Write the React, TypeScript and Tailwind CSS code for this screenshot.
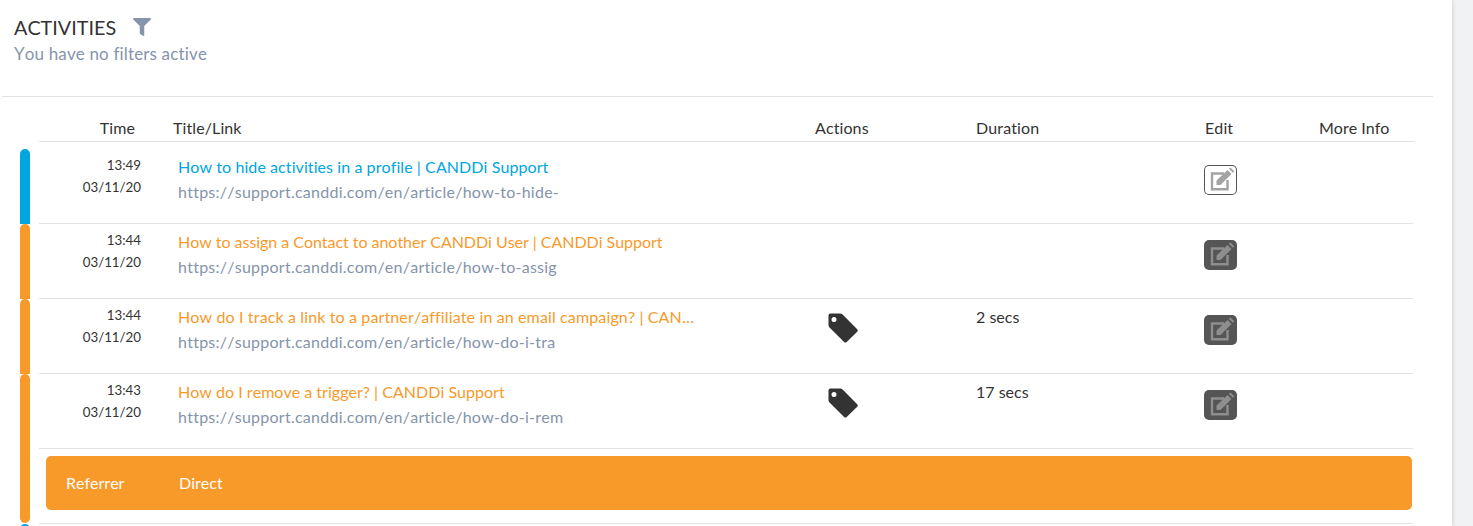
import React from 'react';
import { FaFilter } from 'react-icons/fa';

interface Activity {
  time: string;
  date: string;
  title: string;
  titleSpacing: string;
  url: string;
  tone: 'blue' | 'orange';
  tag?: boolean;
  duration?: string;
}

const activities: Activity[] = [
  { time: '13:49', date: '03/11/20', title: 'How to hide activities in a profile | CANDDi Support', titleSpacing: 'tracking-[0.08px]', url: 'https://support.canddi.com/en/article/how-to-hide-', tone: 'blue' },
  { time: '13:44', date: '03/11/20', title: 'How to assign a Contact to another CANDDi User | CANDDi Support', titleSpacing: 'tracking-[-0.04px]', url: 'https://support.canddi.com/en/article/how-to-assig', tone: 'orange' },
  { time: '13:44', date: '03/11/20', title: 'How do I track a link to a partner/affiliate in an email campaign? | CANDDi Support', titleSpacing: 'tracking-[0.13px]', url: 'https://support.canddi.com/en/article/how-do-i-tra', tone: 'orange', tag: true, duration: '2 secs' },
  { time: '13:43', date: '03/11/20', title: 'How do I remove a trigger? | CANDDi Support', titleSpacing: 'tracking-[0.02px]', url: 'https://support.canddi.com/en/article/how-do-i-rem', tone: 'orange', tag: true, duration: '17 secs' },
];

const EditIcon = () => (
  <svg viewBox="0 0 33 30" className="w-[33px] h-[30px]" fill="none">
    <path d="M23.5 15v9.2H8V8.5h12" stroke="currentColor" strokeWidth="2.4" />
    <path d="M12.5 15.5 23.500 5l4 4-11 11h-4z M24.800 3.800l1.600-1.400 3.900 3.900-1.400 1.500z" fill="currentColor" />
  </svg>
);

const TagIcon = () => (
  <svg viewBox="0 0 30 30" className="w-[30px] h-[30px]">
    <path
      fillRule="evenodd"
      fill="currentColor"
      d="M2.500 0.500h9.500q1.500 0 2.600 1.100l14.600 14.600q1.200 1.300 0 2.600L18.700 29q-1.300 1.200-2.600 0L1.500 14.400Q0.500 13.300 0.500 12V2.500q0-2 2-2zM6 4a2.500 2.500 0 1 0 0 5 2.500 2.500 0 0 0 0-5z"
    />
  </svg>
);

const EditButton = ({ active }: { active: boolean }) => (
  <button
    className={`w-[33px] h-[30px] rounded-[5px] flex items-center justify-center ${
      active ? 'bg-white ring-1 ring-inset ring-[#555555] text-[#a3a3a3]' : 'bg-[#555555] text-[#8e8e8e]'
    }`}
  >
    <EditIcon />
  </button>
);

const App = () => {
  return (
    <div className="w-[1473px] h-[526px] overflow-hidden bg-[#f1f2f4] font-['Lato',sans-serif] text-[#333333] [font-kerning:none] [font-variant-ligatures:none]">
      <div className="w-[1452px] h-[526px] bg-white shadow-[1px_0_4px_rgba(0,0,0,0.12)]">
        <div className="pl-[12px] pt-[15px] h-[97px] ml-[2px] w-[1431px] border-b border-[#dfe3e6]">
          <div className="flex items-center h-[24px]">
            <span className="text-[19.8px] leading-[24px] w-[102px]">ACTIVITIES</span>
            <FaFilter className="ml-[17px] w-[18px] h-[18px] text-[#8594ab]" />
          </div>
          <div className="text-[17px] leading-[24px] tracking-[0.15px] text-[#8594ab] mt-[3px]">You have no filters active</div>
        </div>

        <div className="ml-[39px] w-[1376px] h-[45px] pt-[21px] flex text-[16px] leading-[20px] tracking-[0.1px] border-b border-[#dfe3e6]">
          <div className="w-[96px] text-right">Time</div>
          <div className="ml-[38px] w-[642px]">Title/Link</div>
          <div className="w-[161px]">Actions</div>
          <div className="w-[229px]">Duration</div>
          <div className="w-[114px]">Edit</div>
          <div className="tracking-normal">More Info</div>
        </div>

        {activities.map((a, i) => (
          <div key={i} className="flex">
            <div className="w-[39px] shrink-0 pl-[20px]">
              <div
                className={`w-[10px] rounded-t-[5px] ${i === 0 ? 'mt-[7px] h-[75px]' : 'h-[75px]'} ${
                  a.tone === 'blue' ? 'bg-[#00a6df]' : 'bg-[#f89a2a]'
                }`}
              />
            </div>
            <div className={`w-[1374px] flex border-b border-[#dfe3e6] ${i === 0 ? 'h-[82px] pt-[7px]' : 'h-[75px]'}`}>
              <div className="w-[102px] shrink-0 text-right text-[13.3px] leading-[22px] pt-[5px]">
                <div>{a.time}</div>
                <div>{a.date}</div>
              </div>
              <div className="ml-[37px] w-[525px] shrink-0 pt-[5px]">
                <div className={`text-[16px] leading-[25px] truncate ${a.titleSpacing} ${a.tone === 'blue' ? 'text-[#00a6df]' : 'text-[#f89a2a]'}`}>
                  {a.title}
                </div>
                <div className="text-[16px] leading-[25px] tracking-[0.25px] text-[#8594ab] truncate">{a.url}</div>
              </div>
              <div className="ml-[125px] w-[148px] shrink-0 pt-[14px]">
                {a.tag && <TagIcon />}
              </div>
              <div className="w-[228px] shrink-0 pt-[5px] text-[16px] leading-[25px]">{a.duration}</div>
              <div className="shrink-0 pt-[16px]">
                <EditButton active={i === 0} />
              </div>
            </div>
          </div>
        ))}

        <div className="flex">
          <div className="w-[39px] shrink-0 pl-[20px]">
            <div className="w-[10px] h-[74px] rounded-b-[5px] bg-[#f89a2a]" />
            <div className="w-[10px] h-[5px] mt-[1px] rounded-t-[5px] bg-[#00a6df]" />
          </div>
          <div className="w-[1374px] h-[75px] pt-[7px] pl-[7px] border-b border-[#dfe3e6]">
            <div className="w-[1366px] h-[54px] rounded-[5px] bg-[#f89a2a] flex items-center text-white text-[16px]">
              <span className="ml-[20px] w-[113px]">Referrer</span>
              <span>Direct</span>
            </div>
          </div>
        </div>
      </div>
    </div>
  );
};

export default App;
